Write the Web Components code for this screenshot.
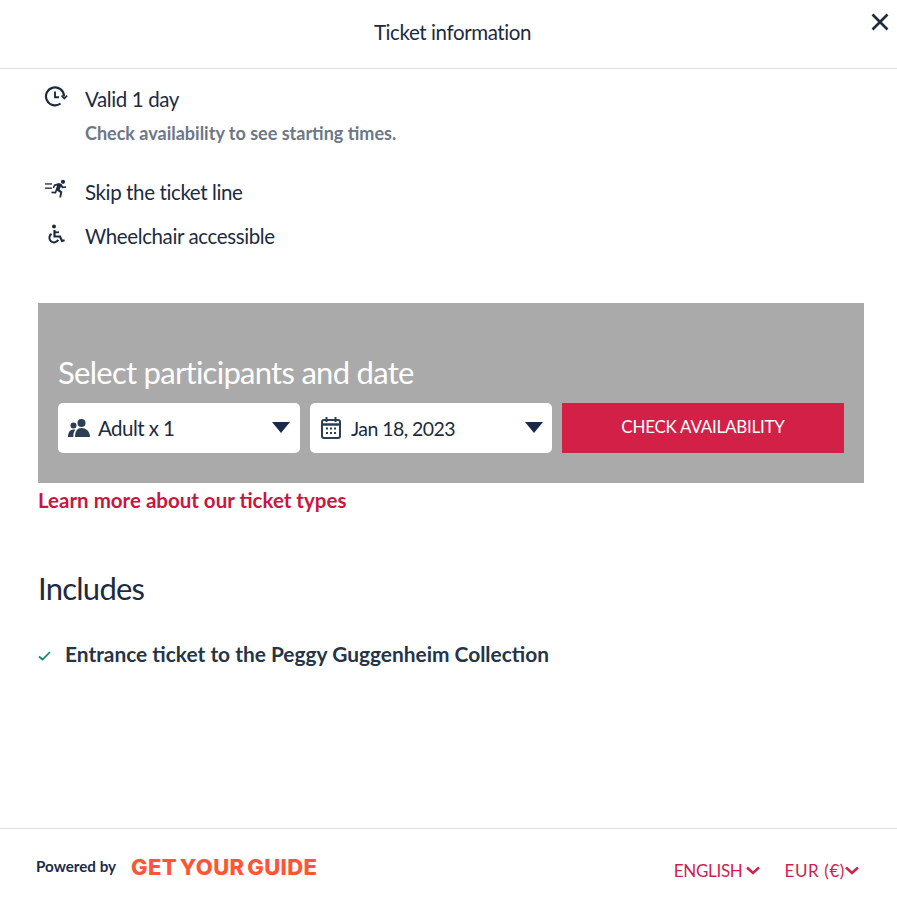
<!DOCTYPE html>
<html lang="en">
<head>
<meta charset="utf-8">
<title>Ticket information</title>
<style>
  html, body { margin: 0; height: 100%; background: #fff; }
  body { font-family: Lato, "Open Sans", sans-serif; color: #1c2b3f; }
</style>
</head>
<body>
<ticket-modal>
  <modal-header slot="header">Ticket information</modal-header>
  <feature-row icon="clock" note="Check availability to see starting times.">Valid 1 day</feature-row>
  <feature-row icon="run" style="margin-top:33px">Skip the ticket line</feature-row>
  <feature-row icon="wheelchair" style="margin-top:16px">Wheelchair accessible</feature-row>
  <booking-panel></booking-panel>
  <includes-list></includes-list>
  <modal-footer slot="footer"></modal-footer>
</ticket-modal>

<script>
const ICONS = {
  clock: `<svg width="24" height="24" viewBox="0 0 24 24" fill="none" stroke="#1c2b3f" stroke-width="2.200"><g transform="translate(0 1)"><path d="M20 11.500A9 9 0 1 0 16.500 18.500"/><path d="M11 6.500V12.200H15" stroke-width="1.900"/><path d="M17.600 10.500l2.600 3 2.900-2.800" stroke-width="1.700"/></g></svg>`,
  run: `<svg width="24" height="24" viewBox="0 0 24 24" fill="#1c2b3f"><rect x="1" y="6.300" width="7" height="1.300"/><rect x="1" y="10.500" width="7" height="1.300"/><circle cx="19" cy="4.800" r="2.100"/><path d="M10 7.500l5-1.500 2.500 1 1.600 2.600 3-.3v1.500l-4 .4-1.200-1.600-1.200 3.200 2.600 2-1.200 5.700h-1.800l.9-4.700-3.200-2-1 2.600-4.500-.2v-1.600l3.400.1 2.200-6.200-2 .6-1 2.200-1.400-.6z"/></svg>`,
  wheelchair: `<svg width="24" height="24" viewBox="0 0 24 24" fill="none" stroke="#1c2b3f"><circle cx="10" cy="5.600" r="2" fill="#1c2b3f" stroke="none"/><path d="M10.500 9v6.500H16l2 4.500 2.600-.8" stroke-width="2.200"/><path d="M10.500 11.300h4.500" stroke-width="1.800"/><path d="M7.500 12.800a4.700 4.700 0 1 0 6.800 6" stroke-width="2"/></svg>`
};

class ModalHeader extends HTMLElement {
  constructor() {
    super();
    this.attachShadow({ mode: "open" }).innerHTML = `
      <style>
        :host { display: flex; align-items: center; justify-content: center; position: relative; box-sizing: content-box; height: 64px; padding-bottom: 4px; padding-left: 8px; border-bottom: 1px solid #dfe1e3; font-size: 20.500px; letter-spacing: -.4px; }
        .close { position: absolute; top: 12px; right: 7px; width: 20px; height: 20px; }
      </style>
      <slot></slot>
      <svg class="close" viewBox="0 0 20 20" stroke="#1c2b3f" stroke-width="2.600" fill="none"><path d="M2.500 2.500l15 15M17.500 2.500l-15 15"/></svg>
    `;
  }
}

class FeatureRow extends HTMLElement {
  constructor() {
    super();
    const note = this.getAttribute("note");
    this.attachShadow({ mode: "open" }).innerHTML = `
      <style>
        :host { display: grid; grid-template-columns: 47px 1fr; }
        .icon { margin-left: 6px; margin-top: -1px; height: 24px; }
        .label { font-size: 20.500px; letter-spacing: -.38px; line-height: 28px; }
        .note { font-size: 18px; line-height: 24px; font-weight: 700; color: #6c7787; margin-top: 8px; }
      </style>
      <div class="icon">${ICONS[this.getAttribute("icon")]}</div>
      <div>
        <div class="label"><slot></slot></div>
        ${note ? `<div class="note">${note}</div>` : ""}
      </div>
    `;
  }
}

class BookingPanel extends HTMLElement {
  constructor() {
    super();
    this.attachShadow({ mode: "open" }).innerHTML = `
      <style>
        :host { display: block; margin-top: 53px; }
        .panel { background: #aaaaaa; height: 180px; box-sizing: border-box; padding: 49px 20px 0; }
        h2 { margin: 0; font-size: 31px; letter-spacing: -.72px; line-height: 40px; font-weight: 400; color: #fff; }
        .row { display: flex; gap: 10px; margin-top: 11px; }
        .picker { width: 242px; height: 50px; background: #fff; border-radius: 5px; display: flex; align-items: center; box-sizing: border-box; padding: 0 10px; font-size: 20.500px; letter-spacing: -.55px; }
        .picker + .picker { padding-right: 9px; }
        .picker svg.i { flex: none; margin-right: 8px; }
        .picker span { flex: 1; }
        .picker .date { font-size: 19.500px; margin-left: 1px; }
        .caret { width: 0; height: 0; border-left: 9px solid transparent; border-right: 9px solid transparent; border-top: 11px solid #1a2b49; margin-top: -2px; }
        .cta { width: 282px; height: 50px; background: #d22047; color: #fff; display: flex; align-items: center; justify-content: center; font-size: 17px; letter-spacing: -.25px; padding-bottom: 3px; box-sizing: border-box; }
        a { display: block; margin-top: 2px; font-size: 20.500px; line-height: 30px; font-weight: 700; color: #c8173f; text-decoration: none; }
      </style>
      <div class="panel">
        <h2>Select participants and date</h2>
        <div class="row">
          <div class="picker">
            <svg class="i" width="22" height="22" viewBox="0 0 22 22" fill="#2b3e55"><circle cx="13.500" cy="6" r="4"/><circle cx="5.500" cy="8.500" r="3"/><path d="M7 20c0-6 2.500-9 6.500-9S22 14 22 20z"/><path d="M0 20c0-4.500 2-7.500 5.500-7.500 .7 0 1.300.1 1.800.3C5.800 14.500 5.300 17 5.300 20z"/></svg>
            <span>Adult x 1</span><div class="caret"></div>
          </div>
          <div class="picker">
            <svg class="i" width="22" height="24" viewBox="0 0 22 24" fill="none" stroke="#2b3e55" stroke-width="2"><rect x="2" y="4" width="18" height="18" rx="2"/><path d="M2 8.500h18" stroke-width="2.500"/><path d="M6.500 1v5M15.500 1v5"/><path d="M6 12.500h2M10 12.500h2M14 12.500h2M6 17h2M10 17h2M14 17h2" stroke-width="1.800"/></svg>
            <span class="date">Jan 18, 2023</span><div class="caret"></div>
          </div>
          <div class="cta">CHECK AVAILABILITY</div>
        </div>
      </div>
      <a href="#">Learn more about our ticket types</a>
    `;
  }
}

class IncludesList extends HTMLElement {
  constructor() {
    super();
    this.attachShadow({ mode: "open" }).innerHTML = `
      <style>
        :host { display: block; margin-top: 53px; }
        h3 { margin: 0; font-size: 31px; letter-spacing: -.75px; line-height: 40px; font-weight: 400; }
        .item { display: flex; align-items: center; margin-top: 31px; font-size: 20.900px; line-height: 30px; font-weight: 700; color: #253446; }
        svg { margin-right: 14px; flex: none; margin-top: 4px; }
      </style>
      <h3>Includes</h3>
      <div class="item">
        <svg width="13" height="10" viewBox="0 0 13 10" fill="none" stroke="#0a8a5c" stroke-width="1.700"><path d="M1 5.500l3.500 3L12 1"/></svg>
        Entrance ticket to the Peggy Guggenheim Collection
      </div>
    `;
  }
}

class ModalFooter extends HTMLElement {
  constructor() {
    super();
    const chev = `<svg width="14" height="9" viewBox="0 0 14 9" fill="none" stroke="#d0214c" stroke-width="2.400"><path d="M1 1.500l6 5.500 6-5.500"/></svg>`;
    this.attachShadow({ mode: "open" }).innerHTML = `
      <style>
        :host { display: flex; align-items: center; height: 73px; border-top: 1px solid #dfe1e3; padding: 0 38px 0 36px; }
        .by { font-size: 15.200px; font-weight: 700; color: #1a2b49; }
        .logo { margin-left: 15px; margin-top: 3px; font-family: Inter, sans-serif; font-weight: 800; font-size: 22px; letter-spacing: .4px; word-spacing: -2.500px; color: #ff5533; }
        .opts { margin-left: auto; display: flex; gap: 25px; font-size: 17px; color: #d0214c; padding-top: 10px; }
        .opt { display: flex; align-items: center; gap: 3px; letter-spacing: -.3px; }
        .opt + .opt { letter-spacing: .6px; gap: 0; }
      </style>
      <span class="by">Powered by</span>
      <span class="logo">GET YOUR GUIDE</span>
      <div class="opts">
        <div class="opt">ENGLISH ${chev}</div>
        <div class="opt">EUR (€) ${chev}</div>
      </div>
    `;
  }
}

class TicketModal extends HTMLElement {
  constructor() {
    super();
    this.attachShadow({ mode: "open" }).innerHTML = `
      <style>
        :host { display: flex; flex-direction: column; height: 902px; overflow: hidden; }
        main { flex: 1; padding: 16px 33px 0 38px; }
      </style>
      <slot name="header"></slot>
      <main><slot></slot></main>
      <slot name="footer"></slot>
    `;
  }
}

customElements.define("modal-header", ModalHeader);
customElements.define("feature-row", FeatureRow);
customElements.define("booking-panel", BookingPanel);
customElements.define("includes-list", IncludesList);
customElements.define("modal-footer", ModalFooter);
customElements.define("ticket-modal", TicketModal);
</script>
</body>
</html>
